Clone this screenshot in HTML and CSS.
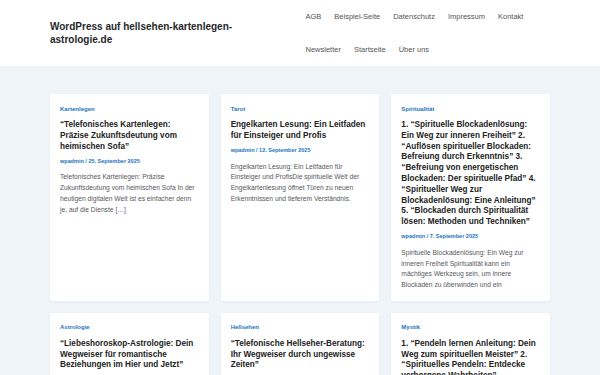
FILE: index.html
```html
<!DOCTYPE html>
<html lang="de">
<head>
  <meta charset="UTF-8" />
  <meta name="viewport" content="width=device-width, initial-scale=1.0" />
  <title>WordPress auf hellsehen-kartenlegen-astrologie.de</title>
  <link rel="stylesheet" href="styles.css">
</head>
<body>
  <header class="site-header">
    <div class="inside-header">
      <div class="site-title">WordPress auf hellsehen-kartenlegen-astrologie.de</div>
      <nav class="main-nav">
        <ul>
          <li><a href="#">AGB</a></li>
          <li><a href="#">Beispiel-Seite</a></li>
          <li><a href="#">Datenschutz</a></li>
          <li><a href="#">Impressum</a></li>
          <li><a href="#">Kontakt</a></li>
          <li><a href="#">Newsletter</a></li>
          <li><a href="#">Startseite</a></li>
          <li><a href="#">Über uns</a></li>
        </ul>
      </nav>
    </div>
  </header>

  <main class="site-main">
    <div class="posts">
      <article class="post">
        <div class="cat"><a href="#">Kartenlegen</a></div>
        <h2 class="entry-title">“Telefonisches Kartenlegen: Präzise Zukunftsdeutung vom heimischen Sofa”</h2>
        <div class="meta">wpadmin / 25. September 2025</div>
        <p class="excerpt">Telefonisches Kartenlegen: Präzise Zukunftsdeutung vom heimischen Sofa In der heutigen digitalen Welt ist es einfacher denn je, auf die Dienste […]</p>
      </article>
      <article class="post">
        <div class="cat"><a href="#">Tarot</a></div>
        <h2 class="entry-title">Engelkarten Lesung: Ein Leitfaden für Einsteiger und Profis</h2>
        <div class="meta">wpadmin / 12. September 2025</div>
        <p class="excerpt">Engelkarten Lesung: Ein Leitfaden für Einsteiger und ProfisDie spirituelle Welt der Engelkartenlesung öffnet Türen zu neuen Erkenntnissen und tieferem Verständnis.</p>
      </article>
      <article class="post">
        <div class="cat"><a href="#">Spiritualität</a></div>
        <h2 class="entry-title">1. “Spirituelle Blockadenlösung: Ein Weg zur inneren Freiheit” 2. “Auflösen spiritueller Blockaden: Befreiung durch Erkenntnis” 3. “Befreiung von energetischen Blockaden: Der spirituelle Pfad” 4. “Spiritueller Weg zur Blockadenlösung: Eine Anleitung” 5. “Blockaden durch Spiritualität lösen: Methoden und Techniken”</h2>
        <div class="meta">wpadmin / 7. September 2025</div>
        <p class="excerpt">Spirituelle Blockadenlösung: Ein Weg zur inneren Freiheit Spiritualität kann ein mächtiges Werkzeug sein, um innere Blockaden zu überwinden und ein</p>
      </article>
      <article class="post">
        <div class="cat"><a href="#">Astrologie</a></div>
        <h2 class="entry-title">“Liebeshoroskop-Astrologie: Dein Wegweiser für romantische Beziehungen im Hier und Jetzt”</h2>
        <div class="meta">wpadmin / 3. September 2025</div>
        <p class="excerpt">Liebeshoroskop-Astrologie: Dein Wegweiser für romantische Beziehungen im Hier und Jetzt […]</p>
      </article>
      <article class="post">
        <div class="cat"><a href="#">Hellsehen</a></div>
        <h2 class="entry-title">“Telefonische Hellseher-Beratung: Ihr Wegweiser durch ungewisse Zeiten”</h2>
        <div class="meta">wpadmin / 1. September 2025</div>
        <p class="excerpt">Telefonische Hellseher-Beratung: Ihr Wegweiser durch ungewisse Zeiten […]</p>
      </article>
      <article class="post">
        <div class="cat"><a href="#">Mystik</a></div>
        <h2 class="entry-title">1. “Pendeln lernen Anleitung: Dein Weg zum spirituellen Meister” 2. “Spirituelles Pendeln: Entdecke verborgene Wahrheiten”</h2>
        <div class="meta">wpadmin / 28. August 2025</div>
        <p class="excerpt">Pendeln lernen Anleitung: Dein Weg zum spirituellen Meister […]</p>
      </article>
    </div>
  </main>
</body>
</html>
```

FILE: styles.css
```css
body {
  margin: 0;
  background: #eff4f9;
  font-family: "Liberation Sans", Arial, sans-serif;
  color: #222;
}
a {
  text-decoration: none;
  color: inherit;
}

.site-header {
  background: #fff;
}
.inside-header {
  width: 500px;
  margin: 0 auto;
  display: flex;
  align-items: center;
  justify-content: space-between;
}
.site-title {
  width: 215px;
  font-size: 10px;
  font-weight: bold;
  line-height: 13.5px;
  color: #25282b;
}
.main-nav {
  flex: 0 0 251px;
}
.main-nav ul {
  list-style: none;
  margin: 0;
  padding: 0;
  display: flex;
  flex-wrap: wrap;
}
.main-nav a {
  display: block;
  padding: 0 6.5px;
  line-height: 33px;
  font-size: 7.5px;
  color: #555;
}

.site-main {
  width: 500px;
  margin: 0 auto;
  padding-top: 28px;
}
.posts {
  display: grid;
  grid-template-columns: repeat(3, 1fr);
  gap: 12px;
}
.post {
  background: #fff;
  padding: 10px;
  border-radius: 2px;
  box-shadow: 0 1px 3px rgba(30, 50, 80, 0.04);
}
.cat {
  font-size: 6px;
  font-weight: bold;
  line-height: 9px;
  color: #1e73be;
  margin-top: 0.5px;
}
.entry-title {
  margin: 6.5px 0 4.5px;
  font-size: 8.2px;
  line-height: 10.8px;
  font-weight: bold;
  color: #222;
}
.meta {
  font-size: 5.5px;
  font-weight: bold;
  line-height: 8px;
  color: #1e73be;
}
.excerpt {
  margin: 7.5px 0 0;
  font-size: 6.7px;
  line-height: 10.7px;
  color: #575760;
}
```
